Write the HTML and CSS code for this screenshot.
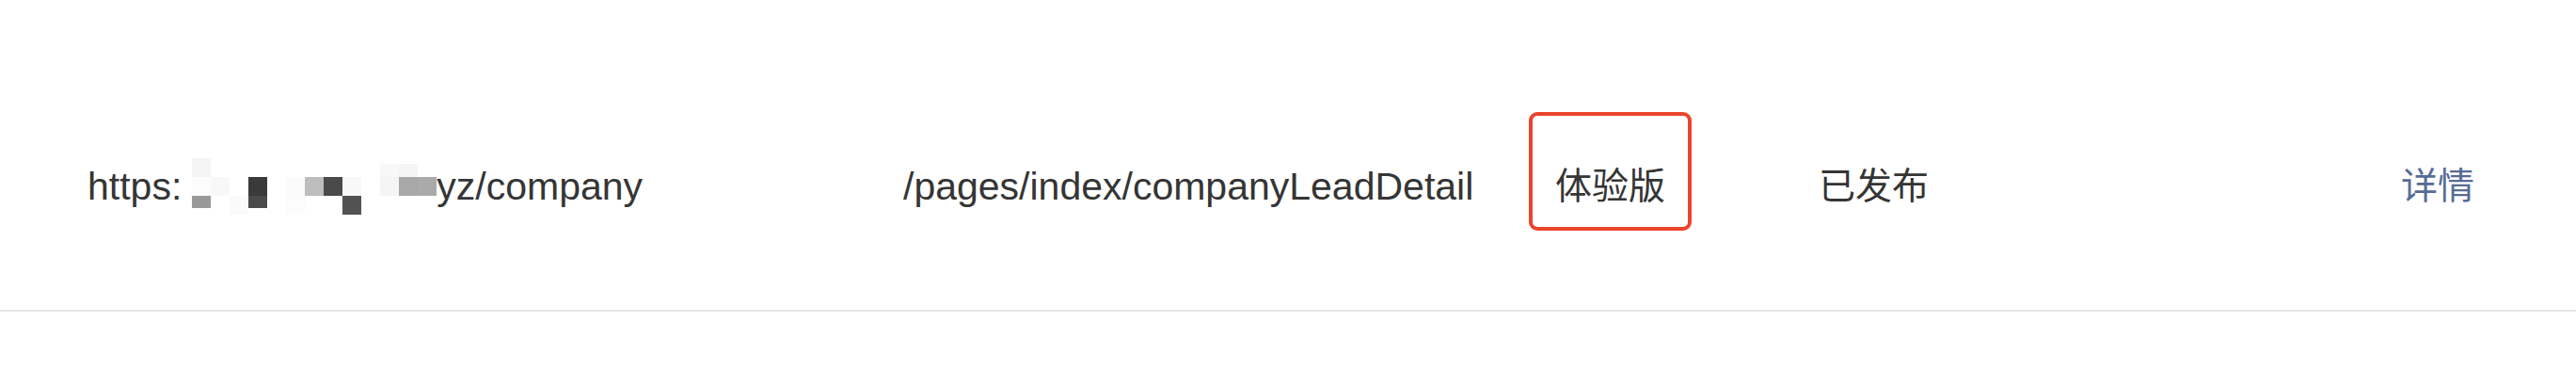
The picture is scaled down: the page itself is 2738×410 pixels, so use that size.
FILE: index.html
```html
<!DOCTYPE html>
<html lang="zh-CN">
<head>
<meta charset="utf-8">
<title>小程序链接</title>
<link rel="stylesheet" href="styles.css">
</head>
<body>
<div class="table">
  <div class="row">
    <div class="cell cell-url">
      <span class="txt">https:<span class="mask"><span class="mosaic">
        <i class="c-f5"></i><i></i><i></i><i></i><i></i><i></i><i></i><i></i><i></i><i></i><i class="c-f8 part"></i><i class="c-f5 part"></i><i></i>
        <i class="c-fc"></i><i class="c-f8"></i><i></i><i class="c-3a"></i><i></i><i class="c-fb"></i><i class="c-bd"></i><i class="c-4a"></i><i class="c-f8"></i><i></i><i class="c-f5"></i><i class="c-a8"></i><i class="c-aa"></i>
        <i class="c-99 short"></i><i></i><i class="c-fa"></i><i class="c-4a short"></i><i></i><i class="c-fc"></i><i></i><i></i><i class="c-52"></i><i></i><i></i><i></i><i></i>
      </span></span>yz/company</span>
    </div>
    <div class="cell cell-path"><span class="txt">/pages/index/companyLeadDetail</span></div>
    <div class="cell cell-ver"><span class="txt cjk">体验版</span><span class="mark"></span></div>
    <div class="cell cell-status"><span class="txt cjk">已发布</span></div>
    <div class="cell cell-op"><a class="link cjk" href="#">详情</a></div>
  </div>
</div>
</body>
</html>
```

FILE: styles.css
```css
* { box-sizing: border-box; }
html, body { margin: 0; padding: 0; background: #ffffff; }
body {
  width: 2738px;
  height: 410px;
  overflow: hidden;
  font-family: "Liberation Sans", "Noto Sans CJK SC", sans-serif;
  font-size: 41px;
  color: #353535;
}
.table { padding-top: 60px; }
.row {
  display: grid;
  grid-template-columns: 867px 693px 280px 619px 1fr;
  padding-left: 93px;
  height: 271px;
  border-bottom: 2px solid #e6e6ea;
}
.cell {
  position: relative;
  display: flex;
  align-items: center;
  padding-top: 6px;
  line-height: 56px;
  white-space: nowrap;
}
.cjk { font-size: 39px; }
.cell-url .txt { display: inline-block; }
.mask {
  position: relative;
  display: inline-block;
  width: 271px;
  height: 0;
}
.mosaic {
  position: absolute;
  left: 11px;
  top: -44px;
  display: grid;
  grid-template-columns: repeat(13, 20px);
  grid-template-rows: 20px 20px 20px;
}
.mosaic i { display: block; }
.mosaic i.part { margin-top: 6px; }
.mosaic i.short { margin-bottom: 7px; }
.c-f5 { background: #f5f5f5; }
.c-f8 { background: #f8f8f8; }
.c-fa { background: #fafafa; }
.c-fb { background: #fbfbfb; }
.c-fc { background: #fcfcfc; }
.c-3a { background: #3a3a3a; }
.c-4a { background: #4a4a4a; }
.c-52 { background: #525252; }
.c-99 { background: #999999; }
.c-a8 { background: #a8a8a8; }
.c-aa { background: #aaaaaa; }
.c-bd { background: #bdbdbd; }
.mark {
  position: absolute;
  left: -28px;
  top: 59px;
  width: 173px;
  height: 126px;
  border: 4px solid #e9452d;
  border-radius: 9px;
}
.link { color: #576b95; text-decoration: none; }
```
